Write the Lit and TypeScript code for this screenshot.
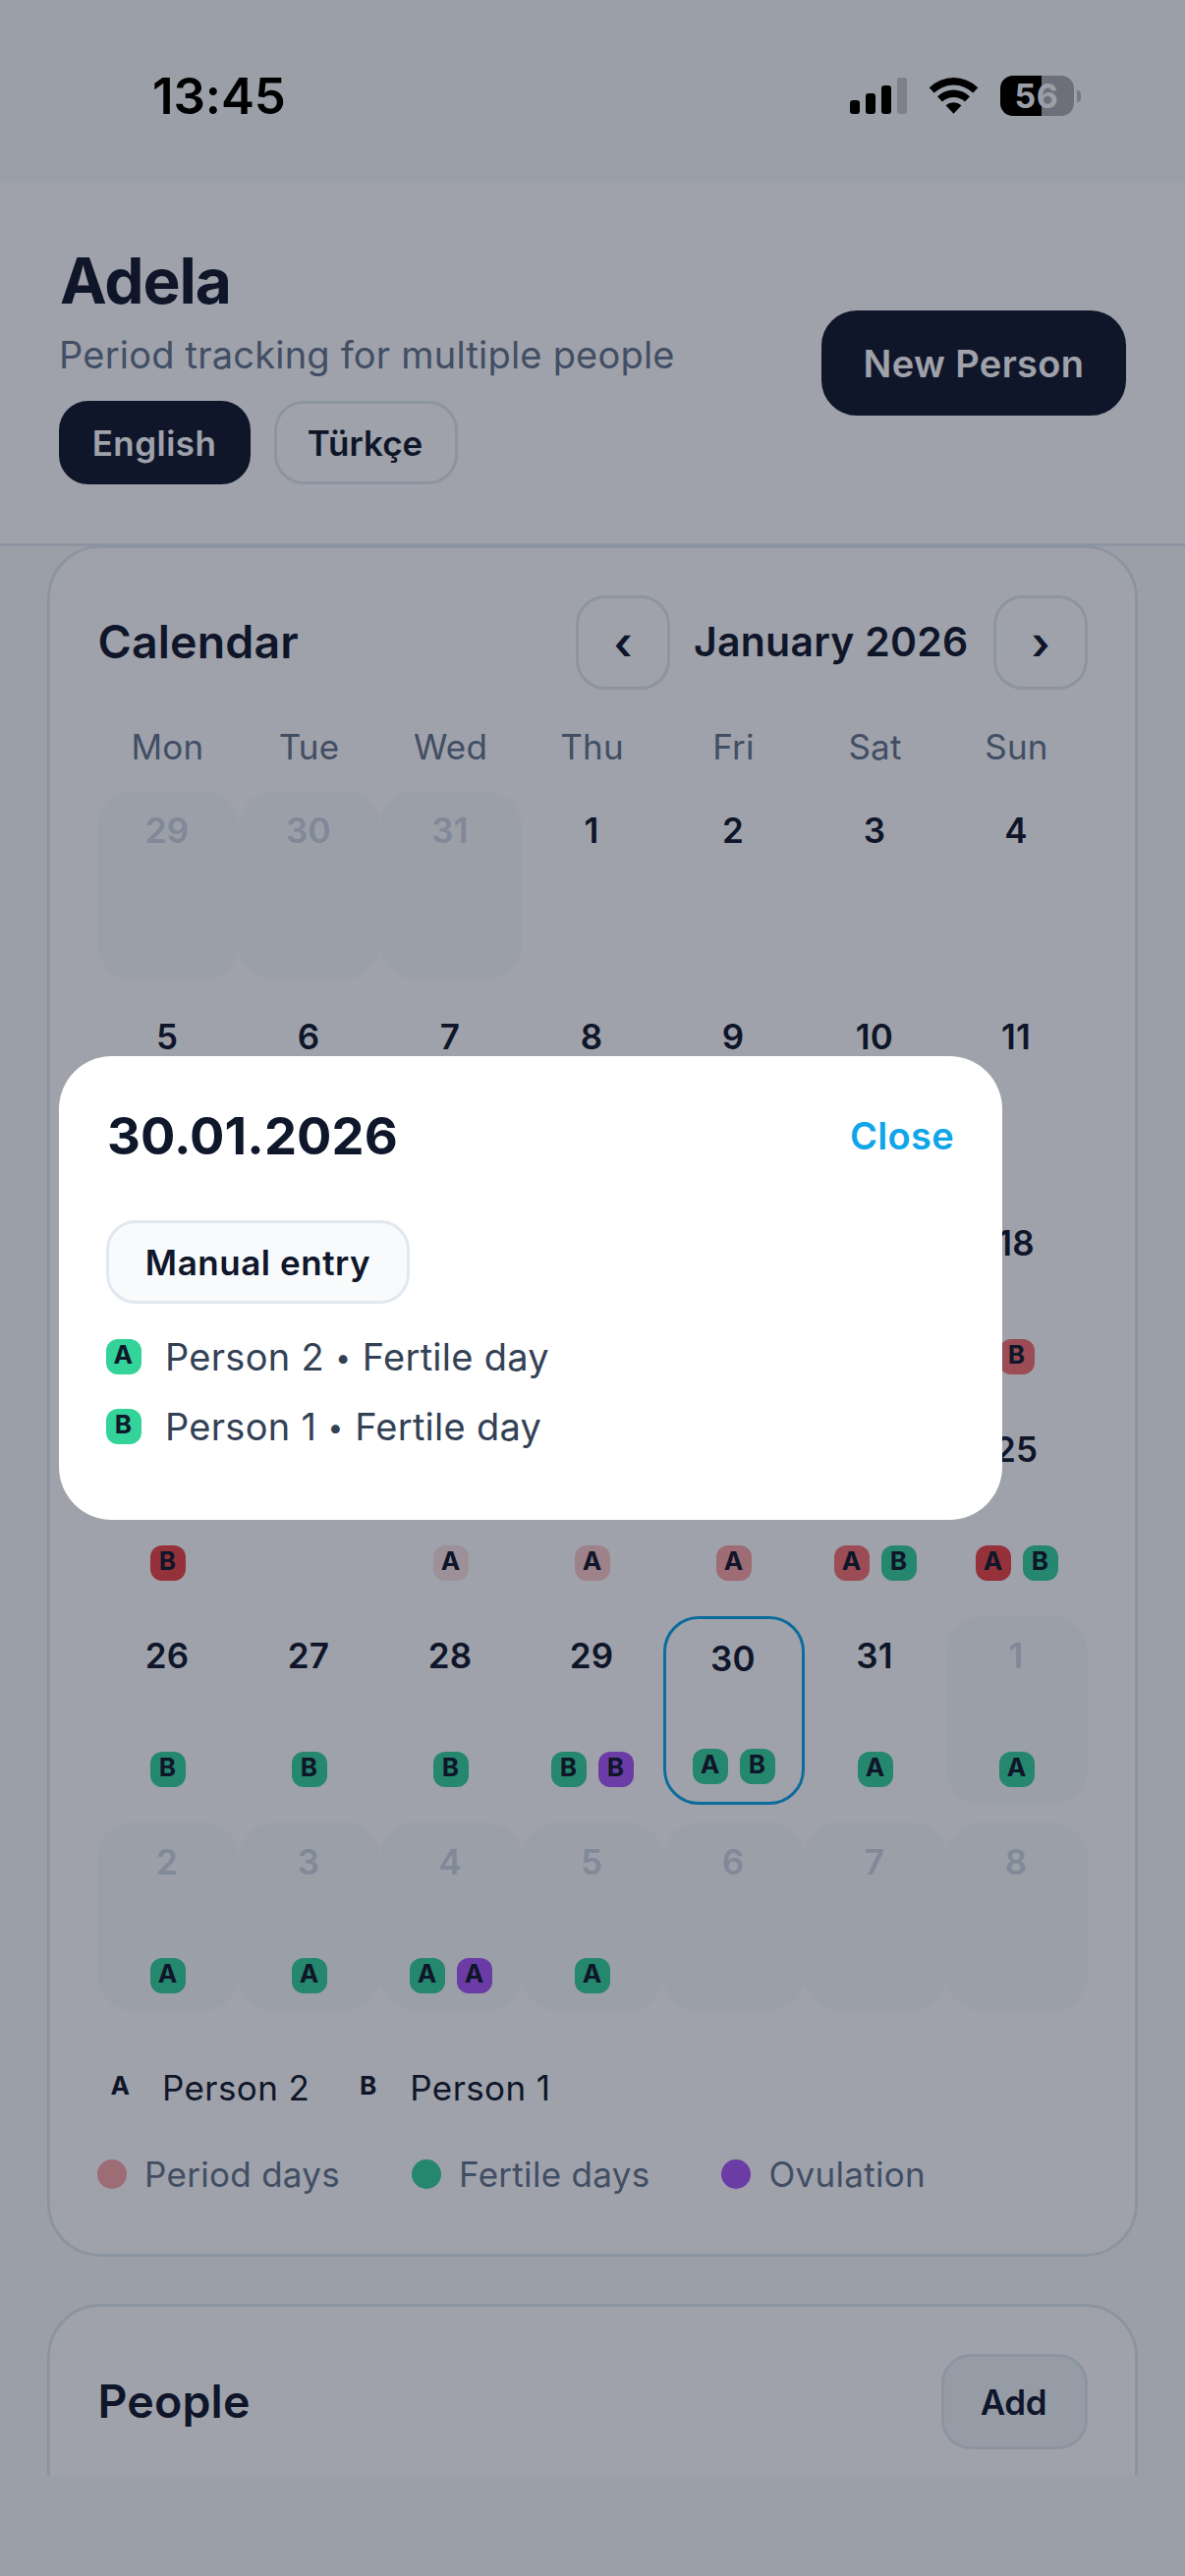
import { LitElement, html, css, svg } from "lit";
import { customElement, property } from "lit/decorators.js";
import { classMap } from "lit/directives/class-map.js";

type Kind = "p1" | "p2" | "p3" | "p4" | "p5" | "fertile" | "ovulation";
type Mark = [string, Kind];
interface Day {
  n: number;
  outside?: boolean;
  selected?: boolean;
  covered?: boolean;
  marks?: Mark[];
}

const WEEKDAYS = ["Mon", "Tue", "Wed", "Thu", "Fri", "Sat", "Sun"];

const JANUARY: Record<number, Mark[]> = {
  18: [["B", "p4"]],
  19: [["B", "p5"]],
  21: [["A", "p1"]],
  22: [["A", "p2"]],
  23: [["A", "p3"]],
  24: [["A", "p4"], ["B", "fertile"]],
  25: [["A", "p5"], ["B", "fertile"]],
  26: [["B", "fertile"]],
  27: [["B", "fertile"]],
  28: [["B", "fertile"]],
  29: [["B", "fertile"], ["B", "ovulation"]],
  30: [["A", "fertile"], ["B", "fertile"]],
  31: [["A", "fertile"]],
};

const FEBRUARY: Record<number, Mark[]> = {
  1: [["A", "fertile"]],
  2: [["A", "fertile"]],
  3: [["A", "fertile"]],
  4: [["A", "fertile"], ["A", "ovulation"]],
  5: [["A", "fertile"]],
};

// Day numbers that lie wholly under the open dialog are left out.
const isCovered = (n: number) => n > 11 && n < 25 && n !== 18;

const DAYS: Day[] = [
  ...[29, 30, 31].map((n) => ({ n, outside: true })),
  ...Array.from({ length: 31 }, (_, i) => ({
    n: i + 1,
    selected: i + 1 === 30,
    covered: isCovered(i + 1),
    marks: JANUARY[i + 1],
  })),
  ...Array.from({ length: 8 }, (_, i) => ({
    n: i + 1,
    outside: true,
    marks: FEBRUARY[i + 1],
  })),
];

@customElement("person-badge")
class PersonBadge extends LitElement {
  @property() letter = "";
  @property() kind = "";

  static styles = css`
    :host {
      display: block;
      flex: none;
    }
    .badge {
      box-sizing: border-box;
      width: 36px;
      height: 36px;
      padding-right: 1px;
      border-radius: 12px;
      color: #0f172a;
      font-size: 26.2px;
      font-weight: 700;
      line-height: 32px;
      text-align: center;
    }
    .p1 { background: #fee2e2; }
    .p2 { background: #fecaca; }
    .p3 { background: #fca5a5; }
    .p4 { background: #f87171; }
    .p5 { background: #ef4444; }
    .fertile { background: #34d399; }
    .ovulation { background: #a855f7; }
  `;

  render() {
    return html`<div class="badge ${this.kind}">${this.letter}</div>`;
  }
}

@customElement("status-bar")
class StatusBar extends LitElement {
  static styles = css`
    :host {
      display: block;
    }
    .bar {
      box-sizing: border-box;
      display: flex;
      align-items: center;
      justify-content: space-between;
      height: 195px;
      padding: 0 106px 0 155px;
      color: #000;
    }
    .time {
      padding-top: 1px;
      font-size: 51px;
      font-weight: 600;
      line-height: 60px;
      letter-spacing: -0.1px;
    }
    .icons {
      display: flex;
      align-items: center;
    }
    .signal {
      width: 58px;
      height: 37px;
      margin-right: 22px;
    }
    .wifi {
      width: 51px;
      height: 37px;
      margin-right: 22px;
    }
    .battery {
      box-sizing: border-box;
      width: 75px;
      height: 41px;
      padding-right: 1px;
      border-radius: 13px;
      background: linear-gradient(to right, #000 42px, #6d707a 42px);
      color: #9b9fa8;
      font-size: 34px;
      font-weight: 700;
      line-height: 42px;
      letter-spacing: 0.5px;
      text-align: center;
    }
    .cap {
      width: 4px;
      height: 12px;
      margin-left: 3px;
      border-radius: 0 4px 4px 0;
      background: #777a83;
    }
  `;

  render() {
    const bars = [
      [0, 23, 14, "#000"],
      [16, 16, 21, "#000"],
      [32, 8, 29, "#000"],
      [48, 0, 37, "#7d8089"],
    ];
    return html`
      <div class="bar">
        <div class="time">13:45</div>
        <div class="icons">
          <svg class="signal" viewBox="0 0 58 37">
            ${bars.map(([x, y, h, fill]) => svg`<rect x=${x} y=${y} width="10" height=${h} rx="3" fill=${fill} />`)}
          </svg>
          <svg class="wifi" viewBox="0 0 51 37">
            <path d="M0.7 10.2A35.5 35.5 0 0 1 50.3 10.2L45.3 15.6A28.4 28.4 0 0 0 5.7 15.6Z" />
            <path d="M9 19.2A23.8 23.8 0 0 1 42 19.2L37 24.6A16.6 16.6 0 0 0 14 24.6Z" />
            <path d="M17.5 28.3A11.8 11.8 0 0 1 33.5 28.3L25.5 36.8Z" />
          </svg>
          <div class="battery">56</div>
          <div class="cap"></div>
        </div>
      </div>
    `;
  }
}

@customElement("day-cell")
class DayCell extends LitElement {
  @property({ attribute: false }) day: Day = { n: 1 };

  static styles = css`
    :host {
      display: block;
    }
    .cell {
      box-sizing: border-box;
      display: flex;
      flex-direction: column;
      align-items: center;
      justify-content: space-between;
      height: 192px;
      padding: 18px 0;
      border-radius: 36px;
      color: #0f172a;
    }
    .outside {
      background: #f8fafc;
      color: #cbd5e1;
    }
    .selected {
      border: 3px solid #0ea5e9;
    }
    .number {
      height: 44px;
      padding-right: 2px;
      font-size: 35px;
      font-weight: 600;
      line-height: 44px;
      letter-spacing: 0.2px;
    }
    .marks {
      display: flex;
      gap: 12px;
    }
  `;

  render() {
    const { n, outside, selected, covered, marks } = this.day;
    return html`
      <div class=${classMap({ cell: true, outside: !!outside, selected: !!selected })}>
        <div class="number">${covered ? "" : n}</div>
        <div class="marks">
          ${(marks ?? []).map(([l, k]) => html`<person-badge letter=${l} kind=${k}></person-badge>`)}
        </div>
      </div>
    `;
  }
}

@customElement("app-root")
class AppRoot extends LitElement {
  static styles = css`
    :host {
      display: block;
      font-family: Inter, "Liberation Sans", sans-serif;
      color: #0f172a;
    }
    .screen {
      position: relative;
      display: flex;
      flex-direction: column;
      width: 1206px;
      height: 2622px;
      overflow: hidden;
      background: #f8fafc;
      white-space: nowrap;
    }
    .status {
      position: relative;
      z-index: 3;
      height: 186px;
      flex: none;
    }
    .header {
      position: relative;
      z-index: 1;
      box-sizing: border-box;
      flex: none;
      display: flex;
      align-items: center;
      justify-content: space-between;
      height: 370px;
      padding: 0 60px;
      background: #fff;
      border-bottom: 3px solid #e2e8f0;
    }
    .title {
      padding-left: 1px;
      font-size: 64px;
      font-weight: 700;
      line-height: 80px;
      letter-spacing: -1.1px;
    }
    .subtitle {
      margin: 12px 0 24px;
      font-size: 38px;
      line-height: 46px;
      letter-spacing: 0.21px;
      color: #64748b;
    }
    .langs {
      display: flex;
      gap: 24px;
    }
    .btn {
      box-sizing: border-box;
      display: flex;
      align-items: center;
      justify-content: center;
      border: 3px solid #e2e8f0;
      border-radius: 30px;
      font-size: 35px;
      font-weight: 600;
    }
    .dark {
      border-color: #0f172a;
      background: #0f172a;
      color: #fff;
    }
    .english {
      width: 195px;
      height: 85px;
      padding-right: 1px;
      letter-spacing: 0.45px;
    }
    .turkish {
      width: 187px;
      height: 85px;
      padding-right: 2px;
      letter-spacing: 0.05px;
    }
    .new-person {
      width: 310px;
      height: 107px;
      border-radius: 36px;
      font-size: 38px;
      letter-spacing: 0.36px;
    }
    .scroll {
      flex: none;
      height: 1964px;
      overflow: hidden;
      padding: 0 48px;
    }
    .card {
      box-sizing: border-box;
      padding: 48px;
      border: 3px solid #e2e8f0;
      border-radius: 54px;
      background: #fff;
    }
    .calendar {
      height: 1742px;
      margin-top: -1px;
      margin-bottom: 48px;
    }
    .people {
      height: 420px;
    }
    .row {
      display: flex;
      align-items: center;
      justify-content: space-between;
    }
    .heading {
      padding: 0 0 2px 0.5px;
      font-size: 46.5px;
      font-weight: 600;
      line-height: 56px;
      letter-spacing: 0.15px;
    }
    .nav {
      display: flex;
      align-items: center;
      gap: 24px;
    }
    .arrow {
      width: 96px;
      height: 96px;
      font-size: 46px;
    }
    .month {
      width: 281px;
      padding-bottom: 2px;
      font-size: 41px;
      font-weight: 600;
      line-height: 50px;
      letter-spacing: 0.22px;
    }
    .weekdays {
      display: grid;
      grid-template-columns: repeat(7, 144px);
      margin: 37px 0 24px;
      font-size: 35px;
      line-height: 42px;
      letter-spacing: 0.2px;
      text-align: center;
      color: #64748b;
    }
    .weekdays div {
      padding-right: 1px;
    }
    .days {
      display: grid;
      grid-template-columns: repeat(7, 144px);
      row-gap: 18px;
    }
    .persons {
      display: flex;
      gap: 42px;
      margin: 56px 0 44px 6px;
    }
    .person {
      display: flex;
      align-items: center;
      gap: 24px;
      font-size: 35px;
      line-height: 44px;
      letter-spacing: 0.4px;
    }
    .legend {
      display: flex;
      gap: 73px;
      color: #64748b;
    }
    .item {
      display: flex;
      align-items: center;
      gap: 18px;
      font-size: 35px;
      line-height: 44px;
      letter-spacing: 0.3px;
    }
    .dot {
      width: 30px;
      height: 30px;
      border-radius: 50%;
    }
    .period { background: #fca5a5; }
    .fertile { background: #34d399; }
    .ovulation { background: #a855f7; }
    .add {
      width: 149px;
      height: 97px;
      padding-right: 2px;
      background: #f1f5f9;
      letter-spacing: -0.3px;
    }
    .overlay {
      position: absolute;
      inset: 0;
      z-index: 2;
      background: rgba(15, 23, 42, 0.4);
    }
    .modal {
      position: absolute;
      z-index: 4;
      left: 60px;
      top: 1075px;
      box-sizing: border-box;
      width: 960px;
      height: 472px;
      padding: 48px;
      border-radius: 54px;
      background: #fff;
    }
    .date {
      padding-left: 1px;
      font-size: 52.5px;
      font-weight: 700;
      line-height: 66px;
      letter-spacing: 0.1px;
    }
    .close {
      padding-right: 1px;
      font-size: 38px;
      font-weight: 600;
      line-height: 66px;
      letter-spacing: 0.3px;
      color: #0ea5e9;
    }
    .manual {
      width: 309px;
      height: 85px;
      margin: 53px 0 30px;
      background: #f8fafc;
      letter-spacing: 0.55px;
    }
    .entries {
      display: flex;
      flex-direction: column;
      gap: 23px;
    }
    .entry {
      display: flex;
      align-items: center;
      gap: 24px;
      height: 48px;
      font-size: 38px;
      line-height: 48px;
      letter-spacing: 0.27px;
      color: #334155;
    }
    .phrase {
      display: flex;
      align-items: center;
    }
    .bullet {
      width: 39px;
      padding-top: 2px;
      font-size: 28px;
      line-height: 46px;
      text-align: center;
    }
  `;

  private entry(letter: string, name: string) {
    return html`
      <div class="entry">
        <person-badge letter=${letter} kind="fertile"></person-badge>
        <div class="phrase">
          <span>${name}</span><span class="bullet">•</span><span>Fertile day</span>
        </div>
      </div>
    `;
  }

  render() {
    return html`
      <div class="screen">
        <status-bar class="status"></status-bar>

        <div class="header">
          <div>
            <div class="title">Adela</div>
            <div class="subtitle">Period tracking for multiple people</div>
            <div class="langs">
              <div class="btn dark english">English</div>
              <div class="btn turkish">Türkçe</div>
            </div>
          </div>
          <div class="btn dark new-person">New Person</div>
        </div>

        <div class="scroll">
          <div class="card calendar">
            <div class="row">
              <div class="heading">Calendar</div>
              <div class="nav">
                <div class="btn arrow">‹</div>
                <div class="month">January 2026</div>
                <div class="btn arrow">›</div>
              </div>
            </div>
            <div class="weekdays">${WEEKDAYS.map((d) => html`<div>${d}</div>`)}</div>
            <div class="days">${DAYS.map((d) => html`<day-cell .day=${d}></day-cell>`)}</div>
            <div class="persons">
              <div class="person"><person-badge letter="A"></person-badge>Person 2</div>
              <div class="person"><person-badge letter="B"></person-badge>Person 1</div>
            </div>
            <div class="legend">
              <div class="item"><span class="dot period"></span>Period days</div>
              <div class="item"><span class="dot fertile"></span>Fertile days</div>
              <div class="item"><span class="dot ovulation"></span>Ovulation</div>
            </div>
          </div>

          <div class="card people">
            <div class="row">
              <div class="heading">People</div>
              <div class="btn add">Add</div>
            </div>
          </div>
        </div>

        <div class="overlay"></div>

        <div class="modal">
          <div class="row">
            <div class="date">30.01.2026</div>
            <div class="close">Close</div>
          </div>
          <div class="btn manual">Manual entry</div>
          <div class="entries">
            ${this.entry("A", "Person 2")}
            ${this.entry("B", "Person 1")}
          </div>
        </div>
      </div>
    `;
  }
}
